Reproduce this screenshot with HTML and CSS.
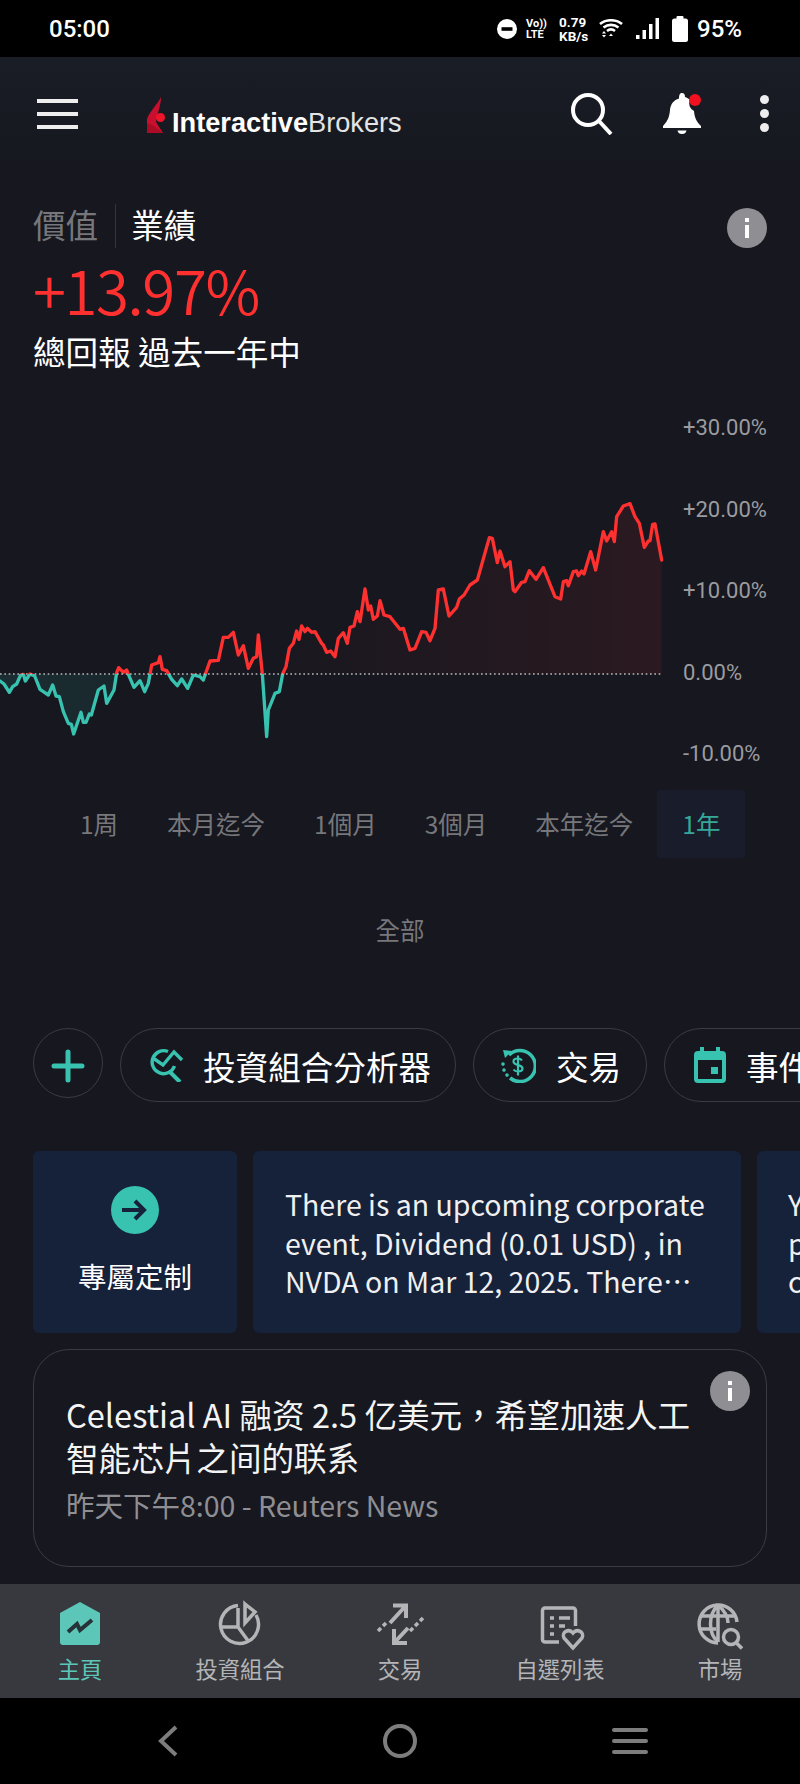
FILE: index.html
```html
<!DOCTYPE html>
<html lang="zh-Hant">
<head>
<meta charset="utf-8">
<title>Interactive Brokers</title>
<link rel="stylesheet" href="styles.css">
</head>
<body>
<div class="screen">
  <header class="status">
    <span class="clock">05:00</span>
    <div class="status-icons">
      <svg class="i-dnd" viewBox="0 0 20 20"><circle cx="10" cy="10" r="10" fill="#fff"/><rect x="4.500" y="8.200" width="11" height="3.600" fill="#000"/></svg>
      <div class="volte"><span>Vo))</span><span>LTE</span></div>
      <div class="speed"><span>0.79</span><span>KB/s</span></div>
      <svg class="i-wifi" viewBox="0 0 24 20" fill="none" stroke="#fff" stroke-width="2.600"><path d="M1 5c6-5 16-5 22 0M4.500 8.500c4.500-3.500 10.500-3.500 15 0M8 12c2.500-2 5.500-2 8 0"/><path d="M12 14.500l2 2.500h-4z" fill="#fff" stroke="none"/><path d="M3 13.500l2-2.500 2 2.500zM3 15h4l-2 2.500z" fill="#fff" stroke="none" transform="translate(0 1)"/></svg>
      <svg class="i-signal" viewBox="0 0 23 21" fill="#fff"><rect x="0" y="17" width="3.500" height="4"/><rect x="6.500" y="12" width="3.500" height="9"/><rect x="13" y="6" width="3.500" height="15"/><rect x="19.500" y="0" width="3.500" height="21"/></svg>
      <svg class="i-batt" viewBox="0 0 16 26" fill="#fff"><rect x="4.500" y="0" width="7" height="4" rx="1"/><rect x="0" y="2.500" width="16" height="23.500" rx="2.500"/></svg>
      <span class="batt-text">95%</span>
    </div>
  </header>

  <nav class="appbar">
    <div class="burger"><i></i><i></i><i></i></div>
    <div class="logo">
      <svg class="logo-mark" viewBox="0 0 20 36"><path d="M15 0C15 8 12 14 10 25L17 36H1V22C4 14 11 8 15 0z" fill="#c8102e"/><path d="M1 36V26c4 1 10 5 16 10z" fill="#a90c24"/><circle cx="14.500" cy="20.500" r="4.500" fill="#f0142a"/></svg>
      <span class="logo-text"><b>Interactive</b>Brokers</span>
    </div>
    <div class="app-actions">
      <svg class="i-search" viewBox="0 0 42 42" fill="none" stroke="#fff" stroke-width="4"><circle cx="17" cy="17" r="15"/><path d="M28 28l12 13"/></svg>
      <svg class="i-bell" viewBox="0 0 38 41"><path d="M19 0c2 0 3 1.500 3 4 2 .5 3.500 1.500 5 3a8 8 0 0 0 4 11c.5 6 2 10 7 15v2H0v-2c5-5 6.500-10 7-16 .5-6 4-10 9-11.500C16 1.500 17 0 19 0z" fill="#fff"/><path d="M14.500 37.500h9c-.5 2.500-2 3.500-4.500 3.500s-4-1-4.500-3.500z" fill="#fff"/><circle cx="32" cy="7" r="6" fill="#f01020"/></svg>
      <div class="kebab"><i></i><i></i><i></i></div>
    </div>
  </nav>

  <main class="content">
    <section class="perf">
      <div class="perf-top">
        <div class="tabs"><span class="tab-off">價值</span><span class="tab-on">業績</span></div>
        <span class="info"><i></i><b></b></span>
      </div>
      <div class="pct">+13.97%</div>
      <div class="pct-sub">總回報 過去一年中</div>
    </section>

    <section class="chart">
      <svg class="plot" viewBox="0 0 2400 1080" aria-hidden="true">
        <defs>
          <clipPath id="above"><rect x="0" y="0" width="2400" height="822"/></clipPath>
          <clipPath id="below"><rect x="0" y="822" width="2400" height="258"/></clipPath>
          <linearGradient id="redfill" x1="800" y1="0" x2="1985" y2="0" gradientUnits="userSpaceOnUse"><stop offset="0" stop-color="#ff3030" stop-opacity=".01"/><stop offset="1" stop-color="#ff3030" stop-opacity=".09"/></linearGradient>
          <linearGradient id="tealfill" x1="80" y1="0" x2="860" y2="0" gradientUnits="userSpaceOnUse"><stop offset="0" stop-color="#38c2b0" stop-opacity=".13"/><stop offset="1" stop-color="#38c2b0" stop-opacity=".03"/></linearGradient>
          <path id="line" d="M0,843 12,852 28,877 38,860 50,852 62,825 70,823 76,843 90,822 104,828 120,868 130,875 145,885 158,855 168,888 178,890 190,935 205,970 214,973 221,1002 243,937 250,967 258,967 268,942 274,945 295,870 312,858 320,910 342,870 350,818 356,803 370,817 380,810 388,830 402,862 420,842 434,875 445,850 455,795 475,788 480,770 487,808 500,812 515,838 532,857 545,837 563,865 580,825 600,830 610,840 630,783 655,781 670,712 685,712 700,697 715,765 730,737 745,805 760,775 770,770 775,705 787,822 800,1010 805,930 825,880 838,875 848,822 858,800 868,745 880,730 890,693 897,718 905,678 915,695 922,685 935,697 945,695 965,730 970,735 980,757 992,753 1005,770 1015,715 1030,698 1042,730 1050,682 1062,678 1072,635 1080,665 1095,567 1105,630 1112,618 1120,658 1132,648 1140,602 1152,645 1170,650 1200,688 1210,685 1230,750 1245,745 1265,695 1278,697 1290,722 1305,685 1315,570 1330,567 1347,648 1370,622 1378,597 1392,585 1410,555 1432,540 1468,413 1477,415 1492,488 1500,453 1515,500 1530,485 1540,570 1545,575 1565,547 1575,545 1588,512 1608,538 1630,503 1665,590 1682,597 1690,545 1700,542 1705,557 1720,515 1730,513 1735,527 1745,513 1752,522 1772,455 1787,510 1810,395 1820,423 1835,395 1843,425 1850,350 1870,318 1890,311 1905,350 1918,370 1933,442 1945,423 1950,422 1958,373 1965,372 1985,480"/>
          <path id="area" d="M0,843 12,852 28,877 38,860 50,852 62,825 70,823 76,843 90,822 104,828 120,868 130,875 145,885 158,855 168,888 178,890 190,935 205,970 214,973 221,1002 243,937 250,967 258,967 268,942 274,945 295,870 312,858 320,910 342,870 350,818 356,803 370,817 380,810 388,830 402,862 420,842 434,875 445,850 455,795 475,788 480,770 487,808 500,812 515,838 532,857 545,837 563,865 580,825 600,830 610,840 630,783 655,781 670,712 685,712 700,697 715,765 730,737 745,805 760,775 770,770 775,705 787,822 800,1010 805,930 825,880 838,875 848,822 858,800 868,745 880,730 890,693 897,718 905,678 915,695 922,685 935,697 945,695 965,730 970,735 980,757 992,753 1005,770 1015,715 1030,698 1042,730 1050,682 1062,678 1072,635 1080,665 1095,567 1105,630 1112,618 1120,658 1132,648 1140,602 1152,645 1170,650 1200,688 1210,685 1230,750 1245,745 1265,695 1278,697 1290,722 1305,685 1315,570 1330,567 1347,648 1370,622 1378,597 1392,585 1410,555 1432,540 1468,413 1477,415 1492,488 1500,453 1515,500 1530,485 1540,570 1545,575 1565,547 1575,545 1588,512 1608,538 1630,503 1665,590 1682,597 1690,545 1700,542 1705,557 1720,515 1730,513 1735,527 1745,513 1752,522 1772,455 1787,510 1810,395 1820,423 1835,395 1843,425 1850,350 1870,318 1890,311 1905,350 1918,370 1933,442 1945,423 1950,422 1958,373 1965,372 1985,480 1985,822 0,822Z"/>
        </defs>
        <use href="#area" fill="url(#redfill)" clip-path="url(#above)"/>
        <use href="#area" fill="url(#tealfill)" clip-path="url(#below)"/>
        <use href="#line" fill="none" stroke="#ff3030" stroke-width="10" stroke-linejoin="round" stroke-linecap="round" clip-path="url(#above)"/>
        <use href="#line" fill="none" stroke="#38c2b0" stroke-width="10" stroke-linejoin="round" stroke-linecap="round" clip-path="url(#below)"/>
        <line x1="0" y1="822" x2="1985" y2="822" stroke="#b8b8b8" stroke-width="5" stroke-dasharray="5 8"/>
      </svg>
      <div class="axis">
        <span>+30.00%</span><span>+20.00%</span><span>+10.00%</span><span>0.00%</span><span>-10.00%</span>
      </div>
    </section>

    <section class="ranges">
      <span class="r r1">1周</span><span class="r r2">本月迄今</span><span class="r r3">1個月</span><span class="r r4">3個月</span><span class="r r5">本年迄今</span><span class="r r6 on">1年</span>
    </section>
    <div class="all">全部</div>

    <section class="pills">
      <div class="add"><svg viewBox="0 0 34 34" fill="none" stroke="#38c2b0" stroke-width="5" stroke-linecap="round"><path d="M17 3v28M3 17h28"/></svg></div>
      <div class="pill p1">
        <svg viewBox="0 0 34 34" fill="none" stroke="#38c2b0" stroke-width="3.400"><path d="M18 3.500A11.500 11.500 0 1 0 24.500 18"/><path d="M20 24l10 10" stroke-width="4"/><path d="M3 10l10 7 11-13 8 8"/></svg>
        <span>投資組合分析器</span>
      </div>
      <div class="pill p2">
        <svg viewBox="0 0 36 36" fill="none" stroke="#38c2b0" stroke-width="3.600"><path d="M9 8a15.500 15.500 0 1 1 1 23"/><path d="M3 3l9 1-7 7z" stroke="none" fill="#38c2b0"/><path d="M3 17v.1M4 23v.1M7 28v.1" stroke-linecap="round"/><path d="M22 13.500c-1-1.500-2.500-2-4.500-2-2.500 0-4 1.200-4 3 0 4.500 9 2.700 9 7 0 1.800-1.800 3-4.500 3-2 0-3.500-.5-4.500-2M18 8.500v20" stroke-width="2.200"/></svg>
        <span>交易</span>
      </div>
      <div class="pill p3">
        <svg viewBox="0 0 32 36" fill="#38c2b0"><path d="M6 0h4v4h12V0h4v4h2a4 4 0 0 1 4 4v24a4 4 0 0 1-4 4H4a4 4 0 0 1-4-4V8a4 4 0 0 1 4-4h2z"/><rect x="4" y="13" width="24" height="19" fill="#16171f"/><rect x="17" y="20" width="7" height="7"/></svg>
        <span>事件</span>
      </div>
    </section>

    <section class="cards">
      <article class="card card-cta">
        <span class="go"><svg viewBox="0 0 26 24" fill="none" stroke="#16213a" stroke-width="4"><path d="M0 12h22M13 3l9 9-9 9"/></svg></span>
        <span class="cta-label">專屬定制</span>
      </article>
      <article class="card card-msg">
        <p>There is an upcoming corporate event, Dividend (0.01 USD) , in NVDA on Mar 12, 2025. There⋯</p>
      </article>
      <article class="card card-next">
        <p>You<br>pl<br>cu</p>
      </article>
    </section>

    <article class="news">
      <span class="info news-info"><i></i><b></b></span>
      <h2>Celestial AI 融资 2.5 亿美元，希望加速人工智能芯片之间的联系</h2>
      <p>昨天下午8:00 - Reuters News</p>
    </article>
  </main>

  <nav class="tabbar">
    <div class="tb active">
      <svg viewBox="0 0 46 44"><path d="M23 0l20 11v29a3 3 0 0 1-3 3H6a3 3 0 0 1-3-3V11z" fill="#5cc7b8"/><path d="M11 30l9-8 3 6 12-10" fill="none" stroke="#263238" stroke-width="4"/></svg>
      <span>主頁</span>
    </div>
    <div class="tb">
      <svg viewBox="0 0 46 44" fill="none" stroke="#b5b5b8" stroke-width="3.500"><path d="M21 3.500A19 19 0 1 0 39 13"/><path d="M21 6v19H5M21 25l11 15"/><path d="M28 2l10 8-10 11z"/></svg>
      <span>投資組合</span>
    </div>
    <div class="tb">
      <svg viewBox="0 0 46 44" fill="none" stroke="#b5b5b8" stroke-width="4"><path d="M16 3.500h13V16M29 3.500L13 21"/><path d="M17 27v14h13M17 41l14-15"/><path d="M1 29l3-3M6 24l3-3M38 24l3-3M43 19l3-3M33 29l3-3" stroke-width="3.500"/></svg>
      <span>交易</span>
    </div>
    <div class="tb">
      <svg viewBox="0 0 46 44" fill="none" stroke="#b5b5b8" stroke-width="3.500"><path d="M22 40H8a2.500 2.500 0 0 1-2.500-2.500v-29A2.500 2.500 0 0 1 8 6h28a2.500 2.500 0 0 1 2.500 2.500V24"/><path d="M13 16h4M22 16h11M13 24h4M22 24h6M13 32h4"/><path d="M36 46l-9-10c-3-6 5-10 9-5 4-5 12-1 9 5z"/></svg>
      <span>自選列表</span>
    </div>
    <div class="tb">
      <svg viewBox="0 0 46 44" fill="none" stroke="#b5b5b8" stroke-width="3.500"><path d="M21 41a19 19 0 1 1 19-21"/><path d="M21 3c-10 10-10 28 0 37M21 3c7 6 10 13 10 18M21 3v37M4 14h33M4 27h15"/><circle cx="34" cy="35" r="7.500"/><path d="M39.500 41l5.500 5.500"/></svg>
      <span>市場</span>
    </div>
  </nav>

  <footer class="sysnav">
    <svg class="s-back" viewBox="0 0 20 32" fill="none" stroke="#7d7d7d" stroke-width="4"><path d="M18 2L3 16l15 14"/></svg>
    <span class="s-home"></span>
    <span class="s-recent"><i></i><i></i><i></i></span>
  </footer>
</div>
</body>
</html>
```
FILE: styles.css
```css
* { box-sizing: border-box; }
html, body { margin: 0; padding: 0; background: #000; }
body { font-family: "Noto Sans CJK TC", "Noto Sans", sans-serif; color: #fff; }
.screen { width: 800px; height: 1784px; overflow: hidden; display: flex; flex-direction: column; background: #16171f; }

/* status bar */
.status { height: 57px; flex: none; background: #000; display: flex; align-items: center; justify-content: space-between; padding: 0 58px 0 49px; }
.clock { font: 500 24px/1 Roboto, sans-serif; }
.status-icons { display: flex; align-items: center; }
.i-dnd { width: 20px; height: 20px; margin-right: 9px; }
.volte { width: 33px; display: flex; flex-direction: column; font: 700 11px/11px Roboto, sans-serif; }
.speed { width: 40px; display: flex; flex-direction: column; font: 700 13.5px/14px Roboto, sans-serif; }
.i-wifi { width: 24px; height: 20px; margin-right: 13px; }
.i-signal { width: 23px; height: 21px; margin-right: 13px; }
.i-batt { width: 16px; height: 26px; margin-right: 9px; }
.batt-text { font: 500 24px/1 Roboto, sans-serif; }

/* app bar */
.appbar { height: 128px; flex: none; background: linear-gradient(#191d25, #16171f); display: flex; align-items: flex-start; padding: 36px 31px 0 37px; }
.burger { width: 41px; display: flex; flex-direction: column; gap: 9px; margin-top: 6px; }
.burger i { height: 4px; background: #eee; display: block; }
.logo { display: flex; align-items: flex-end; margin-left: 68px; margin-top: 4px; height: 36px; }
.logo-mark { width: 20px; height: 36px; }
.logo-text { font: 400 27.2px/26px "Liberation Sans", Arial, sans-serif; margin: 0 0 -3px 6px; color: #e4e4e4; white-space: nowrap; }
.logo-text b { color: #fff; }
.app-actions { margin-left: auto; display: flex; align-items: flex-start; }
.i-search { width: 42px; height: 42px; }
.i-bell { width: 38px; height: 41px; margin-left: 50px; }
.kebab { display: flex; flex-direction: column; gap: 5px; margin-left: 59px; margin-top: 2px; }
.kebab i { width: 9px; height: 9px; border-radius: 50%; background: #eee; display: block; }

/* performance header */
.content { flex: 1; min-height: 0; overflow: hidden; }
.perf { padding: 0 33px; }
.perf-top { display: flex; align-items: center; justify-content: space-between; height: 44px; margin-top: 19px; }
.tabs { display: flex; align-items: flex-start; font-size: 32.6px; line-height: 40px; }
.tab-off { color: #77777b; padding-right: 17px; border-right: 1px solid #34353c; height: 44px; }
.tab-on { padding-left: 15px; }
.info { width: 40px; height: 40px; border-radius: 50%; background: #8e8e93; position: relative; display: block; flex: none; }
.perf-top .info { margin-top: 4px; }
.info i { position: absolute; left: 18px; top: 10px; width: 4px; height: 4px; background: #fff; }
.info b { position: absolute; left: 18px; top: 17px; width: 4px; height: 13px; background: #fff; }
.pct { color: #ff3030; font-size: 60px; line-height: 64px; font-weight: 350; margin-top: 9px; letter-spacing: -1.4px; }
.pct-sub { font-size: 32.6px; line-height: 44px; margin-top: 8px; }

/* chart */
.chart { display: grid; margin-top: 27px; height: 360px; }
.chart > * { grid-area: 1 / 1; }
.plot { width: 800px; height: 360px; display: block; }
.axis { display: flex; flex-direction: column; justify-content: flex-start; gap: 55.5px; padding: 0 0 0 683px; margin-top: 15px; font: 400 22px/26px Roboto, sans-serif; color: #9b9b9f; }

/* ranges */
.ranges { height: 68px; margin-top: 30px; display: flex; align-items: center; font-size: 24.5px; color: #77777b; }
.r { display: block; line-height: 68px; white-space: nowrap; }
.r1 { margin-left: 80px; }
.r2 { margin-left: 49px; }
.r3 { margin-left: 49px; }
.r4 { margin-left: 48px; }
.r5 { margin-left: 48px; }
.r6 { margin-left: 24px; padding: 0 25px; background: #191d2b; border-radius: 4px; }
.r6.on { color: #35a89a; }
.all { text-align: center; font-size: 24.5px; line-height: 34px; color: #77777b; margin-top: 55px; }

/* pills */
.pills { display: flex; align-items: flex-start; gap: 17px; margin-top: 81px; padding-left: 33px; width: 900px; }
.add { width: 70px; height: 70px; border-radius: 50%; border: 1px solid #3a3c44; display: flex; align-items: center; justify-content: center; flex: none; }
.add svg { width: 34px; height: 34px; margin-top: 6px; }
.pill { height: 74px; border-radius: 37px; border: 1px solid #3a3c44; display: flex; align-items: center; font-size: 32.6px; flex: none; padding-left: 29px; }
.pill span { margin-left: 19px; white-space: nowrap; }
.p1 { width: 336px; }
.p1 svg { width: 34px; height: 34px; }
.p2 { width: 174px; padding-left: 26px; }
.p2 svg { width: 36px; height: 36px; }
.p2 span { margin-left: 20px; }
.p3 { width: 200px; }
.p3 svg { width: 32px; height: 36px; }
.p3 span { margin-left: 20px; }

/* cards */
.cards { display: flex; gap: 16px; margin-top: 49px; padding-left: 33px; width: 1000px; }
.card { height: 182px; background: #16213a; border-radius: 6px; flex: none; }
.card-cta { width: 204px; display: flex; flex-direction: column; align-items: center; padding-top: 35px; }
.go { width: 48px; height: 48px; border-radius: 50%; background: #38c2b0; display: flex; align-items: center; justify-content: center; }
.go svg { width: 26px; height: 24px; }
.cta-label { font-size: 28.5px; line-height: 38px; margin-top: 23px; }
.card-msg { width: 488px; padding: 34px 28px 0 32px; }
.card p { margin: 0; font-size: 28.5px; line-height: 38.5px; color: #f0f0f0; }
.card-next { width: 200px; padding: 34px 0 0 31px; }

/* news */
.news { position: relative; margin: 16px 33px 0; height: 218px; border: 1px solid #3a3c44; border-radius: 36px; padding: 42px 52px 0 32px; }
.news-info { position: absolute; right: 16px; top: 21px; }
.news h2 { margin: 0; font-size: 32.6px; line-height: 43px; font-weight: 400; color: #f4f4f4; }
.news p { margin: 7px 0 0; font-size: 28.5px; line-height: 40px; color: #8e8e93; white-space: nowrap; }

/* bottom tabs */
.tabbar { height: 114px; flex: none; background: #37393e; display: grid; grid-template-columns: repeat(5, 160px); }
.tb { display: flex; flex-direction: column; align-items: center; padding-top: 18px; font-size: 22.3px; line-height: 30px; color: #b5b5b8; }
.tb svg { width: 46px; height: 44px; margin-bottom: 7px; display: block; overflow: visible; }
.tb.active { color: #5cc7b8; }

/* system nav */
.sysnav { height: 86px; flex: none; background: #000; display: grid; grid-template-columns: repeat(3, 1fr); align-items: center; justify-items: center; padding: 0 70px; }
.s-back { width: 20px; height: 32px; margin-right: 24px; }
.s-home { width: 34px; height: 34px; border: 4px solid #7d7d7d; border-radius: 50%; display: block; }
.s-recent { display: flex; flex-direction: column; gap: 7px; margin-left: 20px; }
.s-recent i { width: 36px; height: 4px; background: #7d7d7d; border-radius: 2px; display: block; }
```
